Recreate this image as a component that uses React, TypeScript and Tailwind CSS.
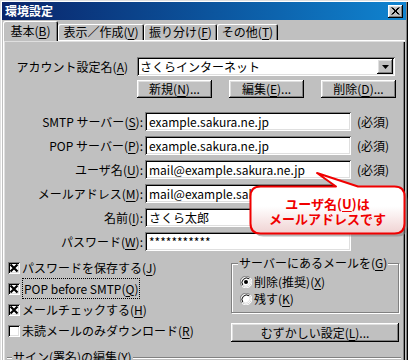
import React from 'react';

/**
 * 環境設定ダイアログ（基本タブ）
 * Win98 風のクラシック UI を再現
 */

// ニーモニック（下線付きアクセスキー）
const Mn = ({ k }: { k: string }) => (
  <>
    (<span className="underline underline-offset-[2px]">{k}</span>)
  </>
);

const RAISED =
  'shadow-[inset_-1px_-1px_0_#000,inset_1px_1px_0_#fff,inset_-2px_-2px_0_#808080,inset_2px_2px_0_#dfdfdf]';
const SUNKEN =
  'shadow-[inset_1px_1px_0_#808080,inset_-1px_-1px_0_#fff,inset_2px_2px_0_#000,inset_-2px_-2px_0_#dfdfdf]';

const Btn = ({ children, className = '' }: { children: React.ReactNode; className?: string }) => (
  <div className={`flex items-center justify-center bg-[#c0c0c0] whitespace-nowrap ${RAISED} ${className}`}>
    {children}
  </div>
);

const FieldRow = ({
  label,
  value,
  required,
}: {
  label: React.ReactNode;
  value: string;
  required?: boolean;
}) => (
  <div className="flex items-center h-[19px]">
    <div className="w-[140px] text-right whitespace-nowrap">{label}</div>
    <div className={`ml-[2px] w-[206px] h-[19px] bg-white flex items-center pl-[4px] overflow-hidden whitespace-nowrap ${SUNKEN}`}>
      {value}
    </div>
    {required && <span className="ml-[6px] whitespace-nowrap">(必須)</span>}
  </div>
);

const CheckBox = ({ checked }: { checked: boolean }) => (
  <div className={`w-[12px] h-[12px] bg-white shrink-0 ${SUNKEN}`}>
    {checked && (
      <svg width="12" height="12" viewBox="0 0 12 12">
        <path d="M2.5 2.5 L9.5 9.5 M9.5 2.5 L2.5 9.5" stroke="#000" strokeWidth="2.2" />
      </svg>
    )}
  </div>
);

const Radio = ({ checked }: { checked: boolean }) => (
  <svg width="12" height="12" viewBox="0 0 12 12" className="shrink-0">
    <circle cx="6" cy="6" r="5" fill="#fff" />
    <path d="M10.2 1.8 A5.9 5.9 0 0 0 1.8 10.2" fill="none" stroke="#808080" strokeWidth="1" />
    <path d="M9.2 2.8 A4.6 4.6 0 0 0 2.8 9.2" fill="none" stroke="#000" strokeWidth="1" />
    <path d="M1.8 10.2 A5.9 5.9 0 0 0 10.2 1.8" fill="none" stroke="#fff" strokeWidth="1" />
    <path d="M2.8 9.2 A4.6 4.6 0 0 0 9.2 2.8" fill="none" stroke="#dfdfdf" strokeWidth="1" />
    {checked && <circle cx="6" cy="6" r="2" fill="#000" />}
  </svg>
);

const CheckRow = ({ checked, children, h = 'h-[21px]' }: { checked: boolean; children: React.ReactNode; h?: string }) => (
  <div className={`flex items-center gap-[2px] ${h}`}>
    <CheckBox checked={checked} />
    <span className="whitespace-nowrap">{children}</span>
  </div>
);

// 吹き出し（注釈）
const Callout = () => (
  <div className="absolute inset-0 pointer-events-none">
    <svg width="408" height="360" viewBox="0 0 408 360" className="absolute left-0 top-0">
      <defs>
        <linearGradient id="bubble" x1="0" y1="0" x2="0" y2="1">
          <stop offset="0" stopColor="#ffffff" />
          <stop offset="0.55" stopColor="#ffffff" />
          <stop offset="1" stopColor="#f0d2d2" />
        </linearGradient>
      </defs>
      <path
        transform="translate(3 3)"
        d="M260.5 186.5 L336 186.5 L317 173 L358 186.5 L394.5 186.5 Q404.5 186.5 404.5 196.5 L404.5 223.5 Q404.5 233.5 394.5 233.5 L260.5 233.5 Q250.5 233.5 250.5 223.5 L250.5 196.5 Q250.5 186.5 260.5 186.5 Z"
        fill="#808080"
        opacity="0.55"
      />
      <path
        d="M260.5 186.5 L336 186.5 L317 173 L358 186.5 L394.5 186.5 Q404.5 186.5 404.5 196.5 L404.5 223.5 Q404.5 233.5 394.5 233.5 L260.5 233.5 Q250.5 233.5 250.5 223.5 L250.5 196.5 Q250.5 186.5 260.5 186.5 Z"
        fill="url(#bubble)"
        stroke="#f00000"
        strokeWidth="2"
        strokeLinejoin="round"
      />
    </svg>
    <div className="absolute left-[250px] top-[196px] w-[155px] text-center text-[13px] leading-[15px] font-bold text-[#f00000]">
      <div>
        ユーザ名<Mn k="U" />は
      </div>
      <div>メールアドレスです</div>
    </div>
  </div>
);

export default function App() {
  return (
    <div className="relative w-[408px] h-[360px] overflow-hidden bg-[#c0c0c0] font-['Noto_Sans_CJK_JP','Liberation_Sans',sans-serif] text-[12px] leading-[14px] text-black">
      {/* ウィンドウ枠 */}
      <div className="h-[420px] p-[2px] shadow-[inset_1px_1px_0_#dfdfdf,inset_2px_2px_0_#fff,inset_-1px_-1px_0_#000,inset_-2px_-2px_0_#808080]">
        {/* タイトルバー */}
        <div className="h-[18px] flex items-center justify-between bg-linear-to-r from-[#0a246a] to-[#1084d0]">
          <span className="pl-[3px] text-white font-bold text-[12px]">環境設定</span>
          <div className={`mr-[3px] w-[15px] h-[13px] bg-[#c0c0c0] flex items-center justify-center ${RAISED}`}>
            <svg width="9" height="8" viewBox="0 0 9 8">
              <path d="M0.5 0.5 L7.5 7.5 M7.5 0.5 L0.5 7.5 M1.5 0.5 L8.5 7.5 M8.5 0.5 L1.5 7.5" stroke="#000" strokeWidth="1" />
            </svg>
          </div>
        </div>

        {/* タブ */}
        <div className="relative z-10 flex items-end h-[20px] pl-[1px]">
          <div className="w-[55px] h-[20px] -mb-[1px] bg-[#c0c0c0] rounded-t-[2px] flex items-center justify-center pb-[1px] shadow-[inset_1px_1px_0_#fff,inset_-1px_0_0_#000,inset_-2px_0_0_#808080]">
            基本<Mn k="B" />
          </div>
          <div className="w-[86px] h-[16px] rounded-t-[2px] flex items-center justify-center shadow-[inset_1px_1px_0_#fff,inset_-1px_0_0_#000,inset_-2px_0_0_#808080]">
            表示／作成<Mn k="V" />
          </div>
          <div className="w-[73px] h-[16px] rounded-t-[2px] flex items-center justify-center shadow-[inset_1px_1px_0_#fff,inset_-1px_0_0_#000,inset_-2px_0_0_#808080]">
            振り分け<Mn k="F" />
          </div>
          <div className="w-[61px] h-[16px] rounded-t-[2px] flex items-center justify-center shadow-[inset_1px_1px_0_#fff,inset_-1px_0_0_#000,inset_-2px_0_0_#808080]">
            その他<Mn k="T" />
          </div>
        </div>

        {/* タブパネル */}
        <div className="mx-[1px] h-[360px] pt-[17px] shadow-[inset_1px_1px_0_#fff,inset_2px_2px_0_#dfdfdf,inset_-1px_-1px_0_#000,inset_-2px_-2px_0_#808080]">
          {/* アカウント */}
          <div className="flex items-center h-[19px]">
            <div className="w-[125px] text-right whitespace-nowrap">
              アカウント設定名<Mn k="A" />
            </div>
            <div className={`ml-[9px] w-[258px] h-[19px] bg-white flex items-center justify-between pl-[3px] pr-[2px] ${SUNKEN}`}>
              <span>さくらインターネット</span>
              <div className={`w-[16px] h-[15px] bg-[#c0c0c0] flex items-center justify-center ${RAISED}`}>
                <svg width="7" height="4" viewBox="0 0 7 4">
                  <path d="M0 0 H7 L3.5 4 Z" fill="#000" />
                </svg>
              </div>
            </div>
          </div>

          <div className="flex gap-[17px] pl-[134px] mt-[4px]">
            <Btn className="w-[75px] h-[18px]">
              新規<Mn k="N" />...
            </Btn>
            <Btn className="w-[75px] h-[18px]">
              編集<Mn k="E" />...
            </Btn>
            <Btn className="w-[75px] h-[18px]">
              削除<Mn k="D" />...
            </Btn>
          </div>

          {/* サーバー情報 */}
          <div className="flex flex-col gap-[5px] mt-[14px]">
            <FieldRow label={<>SMTP サーバー<Mn k="S" />:</>} value="example.sakura.ne.jp" required />
            <FieldRow label={<>POP サーバー<Mn k="P" />:</>} value="example.sakura.ne.jp" required />
            <FieldRow label={<>ユーザ名<Mn k="U" />:</>} value="mail@example.sakura.ne.jp" required />
            <FieldRow label={<>メールアドレス<Mn k="M" />:</>} value="mail@example.sakura.ne.jp" />
            <FieldRow label={<>名前<Mn k="I" />:</>} value="さくら太郎" />
            <FieldRow label={<>パスワード<Mn k="W" />:</>} value="***********" />
          </div>

          {/* オプション */}
          <div className="flex mt-[6px]">
            <div className="w-[228px] pl-[5px]">
              <CheckRow checked>
                パスワードを保存する<Mn k="J" />
              </CheckRow>
              <CheckRow checked>
                <span className="border border-dotted border-black px-[1px] py-[1px]">
                  POP before SMTP<Mn k="Q" />
                </span>
              </CheckRow>
              <CheckRow checked>
                メールチェックする<Mn k="H" />
              </CheckRow>
              <CheckRow checked={false} h="h-[22px]">
                未読メールのみダウンロード<Mn k="R" />
              </CheckRow>
            </div>
            <div className="w-[168px]">
              <div className="relative mt-[6px] h-[50px] border border-[#808080] shadow-[inset_1px_1px_0_#fff,1px_1px_0_#fff] pt-[9px] pl-[8px]">
                <span className="absolute -top-[8px] left-[6px] px-[1px] bg-[#c0c0c0] whitespace-nowrap">
                  サーバーにあるメールを<Mn k="G" />
                </span>
                <div className="flex items-center gap-[2px] h-[17px]">
                  <Radio checked />
                  <span className="whitespace-nowrap">
                    削除(推奨)<Mn k="X" />
                  </span>
                </div>
                <div className="flex items-center gap-[2px] h-[17px]">
                  <Radio checked={false} />
                  <span className="whitespace-nowrap">
                    残す<Mn k="K" />
                  </span>
                </div>
              </div>
              <Btn className="mt-[10px] w-full h-[19px]">
                むずかしい設定<Mn k="L" />...
              </Btn>
            </div>
          </div>

          {/* 署名 */}
          <div className="relative ml-[4px] w-[394px] mt-[15px] h-[30px] border-t border-[#808080] shadow-[inset_0_1px_0_#fff]">
            <span className="absolute -top-[8px] left-[5px] px-[1px] bg-[#c0c0c0] whitespace-nowrap">
              サイン(署名)の編集<Mn k="Y" />
            </span>
          </div>
        </div>
      </div>

      <Callout />
    </div>
  );
}
